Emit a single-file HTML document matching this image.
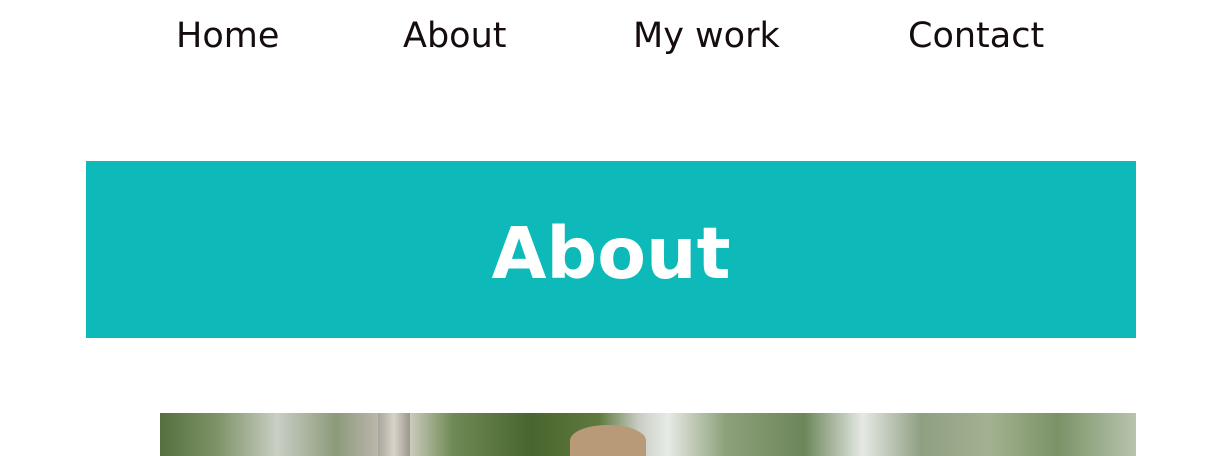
<!DOCTYPE html>
<html><head><style>
html,body{margin:0;width:1218px;height:456px;overflow:hidden}
body{background:#fff;font-family:"DejaVu Sans",Verdana,sans-serif;position:relative}
.n{position:absolute;top:15px;font-size:35px;color:#140c0e;line-height:42px;white-space:nowrap}
.hero{position:absolute;left:86px;top:161px;width:1050px;height:177px;background:#0eb9b9;overflow:hidden}
.hero h1{margin:0;text-align:center;color:#fff;font-weight:bold;font-size:71px;line-height:177px;position:relative;top:4px}
.img{position:absolute;left:160px;top:413px;width:976px;height:43px;overflow:hidden;
background:linear-gradient(90deg,#55703e 0%,#7f9469 6%,#c9cfc4 12%,#8d9a7b 18%,#b7b4a8 22%,#d8d4cb 25%,#6f8a55 30%,#49652f 38%,#5f7a3e 45%,#c7ccc3 49%,#e7ebe6 52%,#8da07a 58%,#6c865a 66%,#e6e9e4 72%,#8f9f82 78%,#a3b290 85%,#7a9266 92%,#b9c4ae 100%)}
</style></head><body>
<div class="n" style="left:176px">Home</div>
<div class="n" style="left:403px">About</div>
<div class="n" style="left:633px">My work</div>
<div class="n" style="left:908px">Contact</div>
<div class="hero"><h1>About</h1></div>
<div class="img">
<div style="position:absolute;left:218px;top:0;width:32px;height:43px;background:linear-gradient(90deg,#a9a69a,#d7d3ca,#9c978a)"></div>
<div style="position:absolute;left:410px;top:12px;width:76px;height:31px;border-radius:50% 50% 0 0;background:#b99a78"></div>
</div>
</body></html>
